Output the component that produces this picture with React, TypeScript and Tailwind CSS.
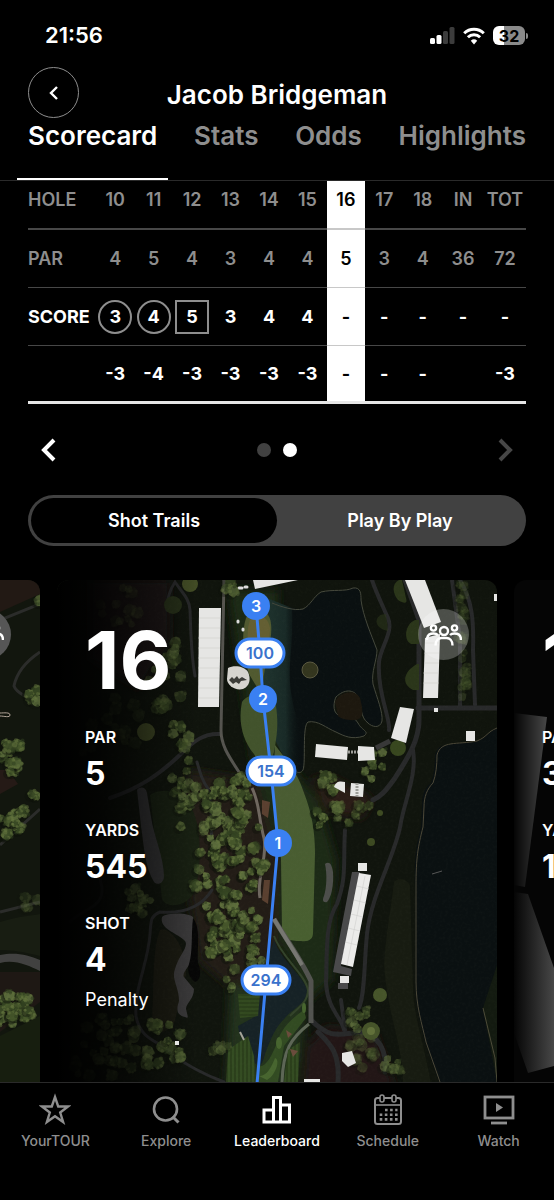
import React, { useState } from "react";

type Mark = "circle" | "square" | "none";

interface Hole {
  hole: string;
  par: string;
  score: string;
  total: string;
  mark: Mark;
}

const holes: Hole[] = [
  { hole: "10", par: "4", score: "3", total: "-3", mark: "circle" },
  { hole: "11", par: "5", score: "4", total: "-4", mark: "circle" },
  { hole: "12", par: "4", score: "5", total: "-3", mark: "square" },
  { hole: "13", par: "3", score: "3", total: "-3", mark: "none" },
  { hole: "14", par: "4", score: "4", total: "-3", mark: "none" },
  { hole: "15", par: "4", score: "4", total: "-3", mark: "none" },
  { hole: "16", par: "5", score: "-", total: "-", mark: "none" },
  { hole: "17", par: "3", score: "-", total: "-", mark: "none" },
  { hole: "18", par: "4", score: "-", total: "-", mark: "none" },
  { hole: "IN", par: "36", score: "-", total: "", mark: "none" },
  { hole: "TOT", par: "72", score: "-", total: "-3", mark: "none" },
];

const currentHole = "16";

const tabs = ["Scorecard", "Stats", "Odds", "Highlights"];

// [center x, center y, half width, half height, number of trees, opacity]
const groves: number[][] = [
  [130, 612, 30, 26, 12, 0.25],
  [168, 655, 10, 14, 7, 0.55],
  [165, 690, 18, 22, 14, 0.5],
  [110, 735, 34, 40, 14, 0.2],
  [183, 735, 12, 14, 7, 0.7],
  [178, 775, 12, 18, 8, 0.65],
  [190, 808, 10, 24, 10, 0.8],
  [228, 788, 24, 10, 14, 0.9],
  [222, 815, 18, 22, 20, 0.85],
  [246, 805, 14, 26, 14, 0.9],
  [225, 862, 20, 26, 26, 0.95],
  [258, 868, 8, 22, 9, 0.9],
  [200, 862, 6, 36, 7, 0.75],
  [222, 910, 16, 24, 22, 0.95],
  [225, 948, 14, 12, 14, 0.95],
  [250, 925, 10, 30, 14, 0.9],
  [256, 955, 6, 10, 4, 0.85],
  [140, 905, 12, 22, 12, 0.5],
  [105, 1045, 34, 32, 34, 0.4],
  [158, 1045, 24, 22, 18, 0.75],
  [231, 982, 5, 14, 4, 0.8],
  [220, 1048, 8, 6, 4, 0.5],
  [228, 588, 6, 7, 3, 0.7],
  [328, 785, 10, 12, 7, 0.85],
  [374, 772, 10, 20, 9, 0.85],
  [343, 814, 10, 10, 7, 0.75],
  [321, 818, 5, 7, 4, 0.9],
  [360, 812, 10, 12, 5, 0.65],
  [356, 1020, 16, 10, 8, 0.65],
  [362, 1052, 12, 16, 14, 0.4],
  [390, 1068, 10, 12, 6, 0.6],
  [462, 610, 3, 30, 14, 0.3],
  [464, 675, 3, 26, 12, 0.3],
];

const treeColors = ["#46572b", "#526335", "#3d4d27", "#5c6d3c", "#354522"];

function buildTrees(list: number[][], seed: number) {
  let s = seed;
  const rand = () => {
    s = (s * 16807) % 2147483647;
    return s / 2147483647;
  };
  return list.flatMap(([cx, cy, w, h, n, opacity]) =>
    Array.from({ length: n }, () => {
      const r = 3.2 + rand() * 3;
      return {
        x: cx + (rand() * 2 - 1) * w,
        y: cy + (rand() * 2 - 1) * h,
        r,
        opacity,
        color: treeColors[Math.floor(rand() * treeColors.length)],
        leaves: Array.from({ length: 9 }, (_, i) => ({
          x: Math.cos(i * 0.7 + rand()) * r * 0.85,
          y: Math.sin(i * 0.7 + rand()) * r * 0.85,
          r: r * (0.2 + rand() * 0.22),
          light: rand() > 0.45,
        })),
      };
    })
  );
}

const Trees: React.FC<{ list: number[][]; seed: number }> = ({ list, seed }) => (
  <g>
    {buildTrees(list, seed).map((t, i) => (
      <g key={i} transform={`translate(${t.x} ${t.y})`} opacity={t.opacity}>
        <circle cx={-2} cy={2} r={t.r + 1} fill="#0d120a" opacity={0.5} />
        <circle r={t.r} fill={t.color} />
        {t.leaves.map((l, j) => (
          <circle
            key={j}
            cx={l.x}
            cy={l.y}
            r={l.r}
            fill={l.light ? "#66773f" : "#30401f"}
            opacity={0.6}
          />
        ))}
      </g>
    ))}
  </g>
);

const pins = [
  { x: 256, y: 606, label: "3" },
  { x: 263, y: 699, label: "2" },
  { x: 278, y: 843, label: "1" },
];

const distances = [
  { x: 260, y: 653, label: "100" },
  { x: 271, y: 771, label: "154" },
  { x: 266, y: 980, label: "294" },
];

const HoleMap: React.FC = () => (
  <svg
    viewBox="57 580 440 502"
    preserveAspectRatio="xMidYMin slice"
    className="absolute inset-0 h-full w-full"
    fontFamily="Inter, sans-serif"
  >
    <defs>
      <linearGradient id="fade" x1="0" x2="1">
        <stop offset="0" stopColor="#000" />
        <stop offset="0.3" stopColor="#000" stopOpacity="0.8" />
        <stop offset="1" stopColor="#000" stopOpacity="0" />
      </linearGradient>
      <linearGradient id="shallow" x1="0" x2="1">
        <stop offset="0" stopColor="#20352f" />
        <stop offset="0.6" stopColor="#192a27" />
        <stop offset="1" stopColor="#0a1011" stopOpacity="0" />
      </linearGradient>
      <linearGradient id="fairway" x1="0" x2="0" y1="0" y2="1">
        <stop offset="0" stopColor="#4a5b33" />
        <stop offset="1" stopColor="#485f30" />
      </linearGradient>
      <filter id="soft" x="-0.2" y="-0.2" width="1.4" height="1.4">
        <feGaussianBlur stdDeviation="5" />
      </filter>
      <filter id="grain" x="0" y="0" width="1" height="1">
        <feTurbulence type="fractalNoise" baseFrequency="0.35" numOctaves="3" />
        <feColorMatrix values="0 0 0 0 0.4  0 0 0 0 0.42  0 0 0 0 0.3  0.6 0 0 0 -0.24" />
      </filter>
      <pattern id="mow" width="4" height="4" patternUnits="userSpaceOnUse">
        <rect width="4" height="4" fill="#2b3f1b" />
        <rect width="4" height="2" fill="#32491f" />
      </pattern>
      <pattern id="mowUp" width="4" height="4" patternUnits="userSpaceOnUse">
        <rect width="4" height="4" fill="#2b3f1b" />
        <rect width="2" height="4" fill="#344c22" />
      </pattern>
    </defs>

    <rect x="57" y="580" width="440" height="502" fill="#10140d" />

    {/* rough and pine straw */}
    <g filter="url(#soft)">
      <path d="M90 580h80v60l-30 50-50-30z" fill="#1b1512" />
      <path d="M228 590h50l0 160 40 50 18 60-4 120-24 20-30-60z" fill="#1d2b14" />
      <path d="M188 770l70 10 22 80-2 100-45 30-35-30-12-90z" fill="#231c14" />
      <path d="M312 778l20 0 40 20-10 20-36-6z" fill="#2b1d19" />
      <path d="M306 1046l20-20 50 8 20 56h-94z" fill="#231815" />
      <path d="M230 985h40l38 10-12 90h-70z" fill="#20301a" />
    </g>

    {/* old holes and bunkers on the left */}
    <path d="M150 795c12-8 34-5 42 14 10 20 10 60 2 84-8 14-28 16-32 6z" fill="#182012" />
    <path d="M137 790c3-4 9-3 10 3l4 24c3 20 13 40 13 60-1 8-8 8-10 5-9-15-10-35-13-56z" fill="#313132" />
    <path d="M160 930c10-5 28 20 26 45-8 20-6 30-12 48-8 14-24 10-22-4 2-30 0-70 8-89z" fill="#1b1b12" />
    <path d="M162 917c6-5 27-4 31 0 2 10 0 28 2 38-4 10-14 18-11 22l10 12c0 10-8 14-8 20 2 8 3 10-1 8-10-2-8-10-6-16 0-14-8-22-4-32 4-14 14-22 10-28-8-8-26-12-23-24z" fill="#3b3a3b" />
    <path d="M193 918c8 10 4 30 5 45 4 10 2 18-3 19-6-4-8-12-6-18 4-12 2-30 4-46z" fill="#060606" />

    {/* cart paths */}
    <g fill="none" stroke="#28292a" strokeWidth="3" strokeLinecap="round">
      <path d="M70 922c10-12 34-14 32-34l-4-20" opacity="0.6" />
      <path d="M167 610c0-14 4-22 8-28 8 12 14 16 15 28 1 25 1 45 5 66" />
      <path d="M110 798c30-10 50-24 72-45 12-12 22-20 38-19" strokeWidth="4" />
      <path d="M197 762c4 14 6 20 12 28 4 24 0 30 4 60" />
      <path d="M212 890c-10 16-26 24-52 22-10 4-9 10-10 22-2 30-16 54-14 82 4 24 24 26 32 34 14 14 40 26 56 32" />
      <path d="M372 580c4 12 8 20 16 38 6 14-8 30-9 44-2 30 12 58 10 68" strokeWidth="4" />
      <path d="M418 708h82" strokeWidth="5" />
      <path d="M405 580l14 40 0 100c0 20-10 36-24 58-10 14-14 18-22 22" strokeWidth="5" />
      <path d="M452 580l8 60 0 68M460 580c12 20 14 40 13 70l2 55" strokeWidth="4" />
      <path d="M413 750c4 24-8 50-12 72-4 30-30 72-34 112-3 30-2 60-8 74" strokeWidth="4" />
      <path d="M345 830c-2 34 2 46-8 74-12 18-10 50-11 80 2 26 16 34 18 46" strokeWidth="4" />
      <path d="M341 1000l4 30" strokeWidth="4" />
      <path d="M311 1020c20 20 28 14 50 12 18 4 26 18 24 40" strokeWidth="5" />
      <path d="M318 1032c12 12 22 20 20 50" strokeWidth="5" />
    </g>
    <path d="M224 580l-3 150c0 14 6 24 18 42" fill="none" stroke="#55544f" strokeWidth="3" />
    <path d="M252 788c8 16 6 28 12 50 4 20-8 40-4 60" fill="none" stroke="#6f675f" strokeWidth="3" />
    <path d="M262 800l8 2-2 16-6-4zM264 880l6 0-2 24-6-4z" fill="#5a4030" />
    <path d="M309 1024c-18 14-26 26-27 58" fill="none" stroke="#5d6656" strokeWidth="3" />

    {/* pond */}
    <path
      d="M262 596c14 6 28 14 41 13 8-4 10-12 18-17 12-3 24 0 32-4 8-1 8 6 8 12 2 16 10 34 16 50 0 10-6 22-4 34 4 14 10 28 9 37-2 8-10 6-14 2-8-6-6-16-10-26-4-8-14-8-22 0-2 4-4 14 2 18 8 4 14-2 20 8 4 8 12 8 6 13-12 4-20 0-28-4-10-4-18-12-28-10-6 4-2 40-5 48-4 4-12 2-16-6l-20-52z"
      fill="#0a1011"
    />
    <path d="M262 596l30 12c2 40-6 60 0 90 4 24 14 40 7 72-6 4-22-20-34-56z" fill="url(#shallow)" />
    <path
      d="M272 603c10 4 22 8 31 6 8-4 10-12 18-17 12-3 24 0 32-4 8-1 8 6 8 12 2 16 10 34 16 50 0 10-6 22-4 34 4 14 10 28 9 37-2 8-10 6-14 2-8-6-6-16-10-26-4-8-14-8-22 0-2 4-4 14 2 18 8 4 14-2 20 8 4 8 12 8 6 13-12 4-20 0-28-4-10-4-18-12-28-10-6 4-2 40-5 48-2 3-4 3-6 2"
      fill="none"
      stroke="#45483c"
      strokeWidth="1"
    />
    <path d="M335 702c4-10 20-14 25-4 2 8 4 16 0 20s-18 2-22-2z" fill="#1d180f" />
    <circle cx="310" cy="670" r="8" fill="#34361f" stroke="#5b5941" />

    {/* lake */}
    <path
      d="M497 728c-10 2-8 10-22 13-20 4-36-1-40 14 0 10-1 20-4 28-8 6-9 14-9 24l-1 20c-5 20-7 30-6 60l0 95c0 24 6 42 10 60l14 40h58z"
      fill="#0a1011"
    />
    <path
      d="M497 728c-10 4-10 9-20 13-20 4-36-1-40 14 0 10-1 20-4 28-6 6-9 14-9 24l-1 20c-5 20-7 30-7 60l0 95c0 24 6 42 10 60l14 40"
      fill="none"
      stroke="#4b4737"
      strokeWidth="1"
    />
    <path d="M497 965l-14 43 14 74z" fill="#131a10" />
    <path d="M483 1008l12 50 2 24" fill="none" stroke="#4c4a38" />
    <path d="M432 874l10-3" stroke="#555" strokeWidth="1" />
    <path d="M394 882c6-6 14-2 16 4l3 100c0 30 12 60 18 98h-28c0-40-16-70-19-120 2-30 6-50 10-82z" fill="#171b11" />

    {/* green, approach and fairway */}
    <path d="M246 618c8-12 24-10 25 6 2 16-6 30-6 44l-4 26-12-20c-6-20-8-40-3-56z" fill="#515a30" />
    <path d="M250 620c8-8 18-4 20 8 0 18-8 34-12 36-10-10-13-30-8-44z" fill="#645f33" />
    <path d="M242 702c8-12 30-8 34 4 2 14 2 26-2 46-4 14-14 14-20 2-12-14-16-34-12-52z" fill="#42532c" />
    <path d="M275 745c12 16 22 26 29 48 8 20 11 40 11 60l-2 80c0 6-4 9-12 8-12 0-18-2-19-10l-1-72-8-72z" fill="url(#fairway)" />
    <path d="M238 621v1M243 629v1M239 588h3M245 587h2" stroke="#ddd" strokeWidth="3" strokeLinecap="round" />
    <path d="M228 668c6-3 16-2 20 4 3 7 2 14-5 17-8 2-16-4-16-10z" fill="#d7d5d0" />
    <path d="M229 680l3-3 2 2 3-3 2 3 3-2 5 3-6 1-2 3-3-2-3 2z" fill="#3c3c38" />
    <path d="M325 864c4-3 7 0 8 8 1 14-2 26-6 30-4 1-5-2-3-6 3-10 3-22 1-32z" fill="#4d4e4b" />

    {/* lower pond and tee boxes */}
    <path d="M274 940c8 22 30 36 33 50 0 14-14 18-22 28-10 10-14 20-20 36-3 14-8 14-12 6-4-14-14-20-15-34l18-10 0-24z" fill="#162226" />
    <path d="M274 936c8 22 31 38 34 54 0 12-10 18-18 26" fill="none" stroke="#33432a" strokeWidth="2" />
    <path d="M238 994h22l-2 22-18 2z" fill="url(#mow)" />
    <path d="M228 1050l20-14 6 20 2 26h-30z" fill="url(#mowUp)" />
    <path d="M258 1066c8 2 14-10 20-26 4-12 14-22 26-30l2 8-22 28-6 36h-22z" fill="#324b22" />
    <path d="M288 1050l12-8-2 40h-14z" fill="url(#mowUp)" />
    <path d="M240 1032l4 8" stroke="#a5a59a" strokeWidth="2" />
    <ellipse cx="279" cy="1043" rx="3" ry="6" fill="#47652f" />
    <path d="M275 1058c6 2 0 18-8 22l-8-4c8 0 12-8 16-18z" fill="#47652f" />
    <ellipse cx="304" cy="1008" rx="2" ry="5" fill="#47652f" />
    <path d="M286 1030l6 4-4 4zM290 1049l8 2-5 6z" fill="#6b4c3c" />
    <path d="M274 919c12 20 28 42 37 62l0 42" fill="none" stroke="#52534f" strokeWidth="5" />
    <path d="M274 919c12 20 20 32 28 46" fill="none" stroke="#777772" strokeWidth="4" />

    <Trees list={groves} seed={42} />

    {/* hedges next to the road */}
    <g fill="#2b361a">
      <path d="M399 580c-8 4-6 14-1 20 6 4 10 4 8-2l-4-18z" />
      <path d="M415 620c-10 4-12 20-4 24l8 0 0-24z" />
      <path d="M417 664c-14 8-16 20-4 26l6 0 0-26z" />
      <path d="M386 614c-12 0-14 14 2 17z" opacity="0.6" />
    </g>
    <circle cx="380" cy="995" r="7" fill="#46542a" />
    <circle cx="371" cy="1031" r="9" fill="#46542a" />
    <circle cx="371" cy="1031" r="4" fill="#61703a" />
    <circle cx="371" cy="842" r="4" fill="#3d4a22" />
    <circle cx="380" cy="813" r="3" fill="#3d4a22" />
    <circle cx="173" cy="605" r="9" fill="#262f19" />
    <circle cx="190" cy="584" r="8" fill="#424c25" />
    <circle cx="146" cy="732" r="9" fill="#414a26" />
    <circle cx="398" cy="748" r="8" fill="#38471f" />

    <rect x="57" y="580" width="440" height="502" filter="url(#grain)" opacity="0.1" />
    <rect x="57" y="580" width="140" height="502" fill="url(#fade)" />

    {/* buildings */}
    <g fill="#e6e6e4">
      <path d="M199 608h22l-2 99h-21z" />
      <path d="M253 580h45l-43 9z" />
      <path d="M405 580h20l16 42-17 6z" />
      <path d="M425 638l15-4-2 64h-15z" />
      <path d="M400 707l14 2-8 34-15-5z" />
      <path d="M316 744l32 3-1 13-32-3z" />
      <path d="M358 746l16 1 1 13-17 1z" />
      <path d="M334 787c2-6 6-6 11-5v11z" />
      <path d="M351 783l13 1-1 13-13-1z" />
      <path d="M466 731h9v10h-9z" />
      <path d="M434 708h4v4h-4zM494 594h3v7h-3zM175 1041h4v4h-4z" />
      <path d="M358 863h9v8h-9zM340 976h9v7h-9z" />
      <path d="M342 1053l10-2 4 12-8 4-6-6z" />
      <path d="M304 1079h16v3h-16z" />
    </g>
    <path d="M352 872h8l-19 94 11 3-1 7-18-4z" fill="#4a4a4b" />
    <path d="M359 873l12 2-18 92-12-3z" fill="#ebebe9" />
    <path d="M338 983h10v6h-10z" fill="#4a4a4b" />
    <path d="M348 752h10M357 783v13" stroke="#9d9d98" strokeWidth="3" strokeDasharray="2 1" />
    <path d="M376 748l14-7" stroke="#383838" strokeWidth="5" />
    <g stroke="#c9c9c6" strokeWidth="0.5">
      <path d="M199 618h21M199 628h21M198 638h22M198 648h22M198 658h22M198 668h21M198 678h21M198 688h21M198 698h21" />
      <path d="M425 643h14M424 653h15M424 663h15M423 673h16M423 683h16" />
      <path d="M357 886l12 3M354 900l12 3M351 914l12 3M348 928l12 3M345 942l12 3M365 876l-18 89" />
    </g>

    {/* shot trail */}
    <path d="M256 606L260 653L263 699L271 771L278 843L266 980L257 1084" fill="none" stroke="#3a80f2" strokeWidth="3" />
    {pins.map((p) => (
      <g key={p.label}>
        <circle cx={p.x} cy={p.y} r={14} fill="#3a80f2" />
        <text x={p.x} y={p.y + 6} textAnchor="middle" fontSize={16} fontWeight={600} fill="#fff">
          {p.label}
        </text>
      </g>
    ))}
    {distances.map((d) => (
      <g key={d.label}>
        <rect x={d.x - 24} y={d.y - 14} width={48} height={28} rx={14} fill="#fff" stroke="#3a80f2" strokeWidth={3} />
        <text x={d.x} y={d.y + 6} textAnchor="middle" fontSize={16} fontWeight={600} fill="#3a72cc">
          {d.label}
        </text>
      </g>
    ))}
  </svg>
);

const leftGroves: number[][] = [
  [38, 605, 2, 5, 2, 0.7],
  [33, 696, 5, 6, 6, 0.8],
  [10, 750, 11, 8, 9, 0.85],
  [15, 770, 8, 7, 7, 0.85],
  [20, 810, 6, 5, 5, 0.85],
  [8, 826, 12, 10, 14, 0.85],
  [36, 793, 4, 6, 3, 0.8],
  [32, 902, 8, 8, 4, 0.35],
  [14, 1010, 16, 16, 26, 0.9],
];

const PreviousHoleMap: React.FC = () => (
  <svg viewBox="0 580 40 502" preserveAspectRatio="xMaxYMin slice" className="absolute inset-0 h-full w-full">
    <rect y="580" width="40" height="502" fill="#12160e" />
    <path d="M0 580h40v14L0 612z" fill="#221914" />
    <path d="M0 620l40-16M40 652c-18 12-24 24-26 34 2 6 8 8 14 12M0 912l40-10M0 845l40-36" fill="none" stroke="#2b2c2a" strokeWidth="3" />
    <path d="M0 922c20-6 30-6 40-8v42c-16-4-28-6-40-6z" fill="#181d12" />
    <path d="M0 955c16-3 28 0 40 5v11c-12-6-26-12-40-8z" fill="#414140" />
    <path d="M0 972h40v30l-40 30z" fill="#1e1814" />
    <path d="M0 713c4 0 10-1 10 2s-6 1-10 1" fill="none" stroke="#b4a69a" />
    <path d="M0 770h8l10 14-18 10z" fill="#251a16" />
    <Trees list={leftGroves} seed={7} />
    <path d="M0 1036l40-20v66H0z" fill="#171e0f" />
  </svg>
);

const NextHoleMap: React.FC = () => (
  <svg viewBox="514 580 40 502" preserveAspectRatio="xMinYMin slice" className="absolute inset-0 h-full w-full">
    <defs>
      <linearGradient id="roof" x1="0" x2="1">
        <stop offset="0" stopColor="#050505" />
        <stop offset="1" stopColor="#474747" />
      </linearGradient>
    </defs>
    <rect x="514" y="580" width="40" height="502" fill="#050505" />
    <path d="M514 713l33 4-22 170-11-2z" fill="url(#roof)" />
    <path d="M514 892l14 2 26 74v98l-26 7-14-40z" fill="url(#roof)" />
  </svg>
);

const SpectatorsIcon: React.FC = () => (
  <svg viewBox="0 0 36 24" className="h-6 w-9" fill="none" stroke="#fff" strokeWidth="2.400">
    <circle cx="18" cy="8" r="4" />
    <circle cx="7.500" cy="5" r="2.600" />
    <circle cx="28.500" cy="5" r="2.600" />
    <path d="M9.500 22.500c0-5 3-7.500 6-7.500h5c3 0 6 2.500 6 7.500" />
    <path d="M1 17c0-5 3-6.500 6.500-6.500 2 0 3.500 .5 4.500 1.500" />
    <path d="M35 17c0-5-3-6.500-6.500-6.500-2 0-3.500 .5-4.500 1.500" />
  </svg>
);

const StatusBar: React.FC = () => (
  <div className="flex h-[67px] items-center justify-between pl-[45px] pr-[26px] pt-1">
    <span className="text-[22px] font-semibold">21:56</span>
    <div className="flex items-center gap-2">
      <svg viewBox="0 0 25 18" className="h-[18px] w-[25px]" fill="#fff">
        <rect x="0" y="11" width="5" height="6" rx="1.500" />
        <rect x="6.500" y="8" width="5" height="9" rx="1.500" />
        <rect x="13" y="4" width="5" height="13" rx="1.500" fill="#3c3c3c" />
        <rect x="19.500" y="0" width="5" height="17" rx="1.500" fill="#3c3c3c" />
      </svg>
      <svg viewBox="0 0 22 18" className="h-[18px] w-[22px]" fill="none" stroke="#fff" strokeWidth="3">
        <path d="M1.200 6.200a14 14 0 0 1 19.600 0" />
        <path d="M4.900 10.200a8.700 8.700 0 0 1 12.200 0" />
        <path d="M11 17.400l-3.200-3.700a4.800 4.800 0 0 1 6.400 0z" fill="#fff" stroke="none" />
      </svg>
      <div className="flex items-center gap-px">
        <div className="flex h-[19px] w-8 items-center justify-center rounded-md bg-linear-to-r from-white from-33% to-[#8a8a8a] to-33% text-base font-bold text-black">
          32
        </div>
        <div className="h-[6px] w-[2px] rounded-r-full bg-[#8a8a8a]" />
      </div>
    </div>
  </div>
);

const cellTone = (hole: string, active: boolean) => {
  if (hole === currentHole) return "bg-white text-black border-[#c8c8c8]";
  return active ? "text-white border-[#474747]" : "text-[#8e8e8e] border-[#474747]";
};

const Scorecard: React.FC = () => (
  <table className="w-full table-fixed border-separate border-spacing-0 border-b-[3px] border-[#e6e6e6] text-center text-lg font-semibold leading-6">
    <colgroup>
      <col className="w-[68px]" />
      {holes.map((h) => (
        <col key={h.hole} className={h.hole === "IN" || h.hole === "TOT" ? "w-[42px]" : ""} />
      ))}
    </colgroup>
    <thead>
      <tr className="h-[49px]">
        <th scope="row" className="border-b-2 border-[#474747] pb-[10px] text-left font-semibold text-[#8e8e8e]">
          HOLE
        </th>
        {holes.map((h) => (
          <th key={h.hole} scope="col" className={`border-b-2 pb-[10px] font-semibold ${cellTone(h.hole, false)}`}>
            {h.hole}
          </th>
        ))}
      </tr>
    </thead>
    <tbody>
      <tr className="h-[58px]">
        <th scope="row" className="border-b border-[#474747] text-left font-semibold text-[#8e8e8e]">
          PAR
        </th>
        {holes.map((h) => (
          <td key={h.hole} className={`border-b ${cellTone(h.hole, false)}`}>
            {h.par}
          </td>
        ))}
      </tr>
      <tr className="h-[58px]">
        <th scope="row" className="border-b border-[#474747] text-left font-bold">
          SCORE
        </th>
        {holes.map((h) => (
          <td key={h.hole} className={`border-b font-bold ${cellTone(h.hole, true)}`}>
            <span
              className={
                h.mark === "circle"
                  ? "-mx-1 inline-flex h-[34px] w-[34px] items-center justify-center rounded-full border-2 border-[#8e8e8e]"
                  : h.mark === "square"
                  ? "-mx-1 inline-flex h-[34px] w-[34px] items-center justify-center border-2 border-[#8e8e8e]"
                  : ""
              }
            >
              {h.score}
            </span>
          </td>
        ))}
      </tr>
      <tr className="h-[55px]">
        <td></td>
        {holes.map((h) => (
          <td key={h.hole} className={`font-bold ${cellTone(h.hole, true)}`}>
            {h.total}
          </td>
        ))}
      </tr>
    </tbody>
  </table>
);

const Stat: React.FC<{ label: string; value: string }> = ({ label, value }) => (
  <div className="mb-6">
    <dt className="text-base font-semibold leading-6">{label}</dt>
    <dd className="mt-[5px] text-[32px] font-bold leading-10">{value}</dd>
  </div>
);

const navItems = [
  {
    label: "YourTOUR",
    icon: <path d="M16 4l3.200 9.500H29l-7.800 6 2.900 9.500L16 23.200 7.900 29l2.900-9.500-7.800-6h9.800z" strokeWidth="2.400" />,
  },
  {
    label: "Explore",
    icon: (
      <>
        <circle cx="15.500" cy="16" r="11.500" strokeWidth="2.600" />
        <path d="M22.500 23.500l6 6" strokeWidth="3" />
      </>
    ),
  },
  {
    label: "Leaderboard",
    icon: <path d="M3 29v-12h9.500v12zM12.500 29V4.500h7v24.500zM19.500 29v-17h9v17z" strokeWidth="3" />,
  },
  {
    label: "Schedule",
    icon: (
      <>
        <rect x="3" y="5" width="26" height="26" rx="2.500" strokeWidth="2" />
        <path d="M3 12h26" strokeWidth="1.600" />
        <rect x="8" y="2" width="4" height="7" rx="2" fill="#000" strokeWidth="1.600" />
        <rect x="20" y="2" width="4" height="7" rx="2" fill="#000" strokeWidth="1.600" />
        <path d="M13 17h12.500M7.700 21.700h18M7.700 26.400h18" strokeWidth="2.600" strokeDasharray="2.600 2.500" />
      </>
    ),
  },
  {
    label: "Watch",
    icon: (
      <>
        <rect x="2" y="4" width="28" height="21" strokeWidth="2.800" />
        <path d="M13 10v9l7-4.500z" fill="currentColor" stroke="none" />
        <path d="M8 30h16" strokeWidth="2.800" />
      </>
    ),
  },
];

const App: React.FC = () => {
  const [activeTab, setActiveTab] = useState("Scorecard");
  const [view, setView] = useState("Shot Trails");
  const [activeNav, setActiveNav] = useState("Leaderboard");

  return (
    <div className="flex min-h-screen flex-col overflow-hidden bg-black font-[Inter,sans-serif] text-white">
      <StatusBar />

      <header>
        <div className="relative flex h-[52px] items-end justify-center">
          <button
            aria-label="Back"
            className="absolute left-7 top-0 flex h-[51px] w-[51px] items-center justify-center rounded-full border border-[#8e8e8e]"
          >
            <svg viewBox="0 0 12 16" className="h-4 w-3" fill="none" stroke="#fff" strokeWidth="2.400">
              <path d="M9 2L3 8l6 6" />
            </svg>
          </button>
          <h1 className="text-[26px] font-semibold leading-[48px]">Jacob Bridgeman</h1>
        </div>
        <nav className="flex justify-between border-b border-[#2a2a2a] px-[17px]">
          {tabs.map((tab) => (
            <button
              key={tab}
              onClick={() => setActiveTab(tab)}
              className={`border-b-2 px-[11px] pb-[25px] text-[26px] font-semibold leading-[34px] ${
                activeTab === tab ? "border-white text-white" : "border-transparent text-[#8e8e8e]"
              }`}
            >
              {tab}
            </button>
          ))}
        </nav>
      </header>

      <section className="px-7">
        <Scorecard />
        <div className="flex h-[91px] items-center justify-between px-3">
          <button aria-label="Front nine">
            <svg viewBox="0 0 16 24" className="h-6 w-4" fill="none" stroke="#fff" strokeWidth="4">
              <path d="M14 2L4 12l10 10" />
            </svg>
          </button>
          <div className="flex gap-3">
            <span className="h-[14px] w-[14px] rounded-full bg-[#414141]" />
            <span className="h-[14px] w-[14px] rounded-full bg-white" />
          </div>
          <button aria-label="Back nine">
            <svg viewBox="0 0 16 24" className="h-6 w-4" fill="none" stroke="#474747" strokeWidth="4">
              <path d="M2 2l10 10L2 22" />
            </svg>
          </button>
        </div>
        <div className="grid h-[51px] grid-cols-2 rounded-full bg-[#414141] p-[3px]">
          {["Shot Trails", "Play By Play"].map((name) => (
            <button
              key={name}
              onClick={() => setView(name)}
              className={`rounded-full text-lg font-semibold ${view === name ? "bg-black" : ""}`}
            >
              {name}
            </button>
          ))}
        </div>
      </section>

      <section className="mt-[34px] flex min-h-[502px] flex-1 gap-[17px]">
        <div className="relative w-10 overflow-hidden rounded-tr-xl">
          <PreviousHoleMap />
          <div className="absolute -left-10 top-[29px] flex h-[51px] w-[51px] items-center justify-center rounded-full bg-[#565656]">
            <SpectatorsIcon />
          </div>
        </div>

        <article className="relative flex-1 overflow-hidden rounded-t-xl">
          <HoleMap />
          <button
            aria-label="Group"
            className="absolute right-7 top-[29px] flex h-[51px] w-[51px] items-center justify-center rounded-full bg-white/25"
          >
            <SpectatorsIcon />
          </button>
          <div className="relative px-7 pt-10">
            <h2 className="mb-[25px] text-[80px] font-bold leading-[80px]">16</h2>
            <dl>
              <Stat label="PAR" value="5" />
              <Stat label="YARDS" value="545" />
              <Stat label="SHOT" value="4" />
            </dl>
            <p className="-mt-4 text-lg leading-6">Penalty</p>
          </div>
        </article>

        <article className="relative w-10 overflow-hidden rounded-tl-xl">
          <NextHoleMap />
          <div className="relative pl-7 pt-10">
            <h2 className="mb-[25px] text-[80px] font-bold leading-[80px]">17</h2>
            <dl>
              <Stat label="PAR" value="3" />
              <Stat label="YARDS" value="1" />
            </dl>
          </div>
        </article>
      </section>

      <nav className="grid h-[118px] grid-cols-5 border-t border-[#2a2a2a] pt-[10px]">
        {navItems.map((item) => (
          <button
            key={item.label}
            onClick={() => setActiveNav(item.label)}
            className={`flex flex-col items-center gap-[6px] text-sm font-medium leading-5 ${
              activeNav === item.label ? "text-white" : "text-[#8e8e8e]"
            }`}
          >
            <svg viewBox="0 0 32 32" className="h-8 w-8" fill="none" stroke="currentColor">
              {item.icon}
            </svg>
            {item.label}
          </button>
        ))}
      </nav>
    </div>
  );
};

export default App;
